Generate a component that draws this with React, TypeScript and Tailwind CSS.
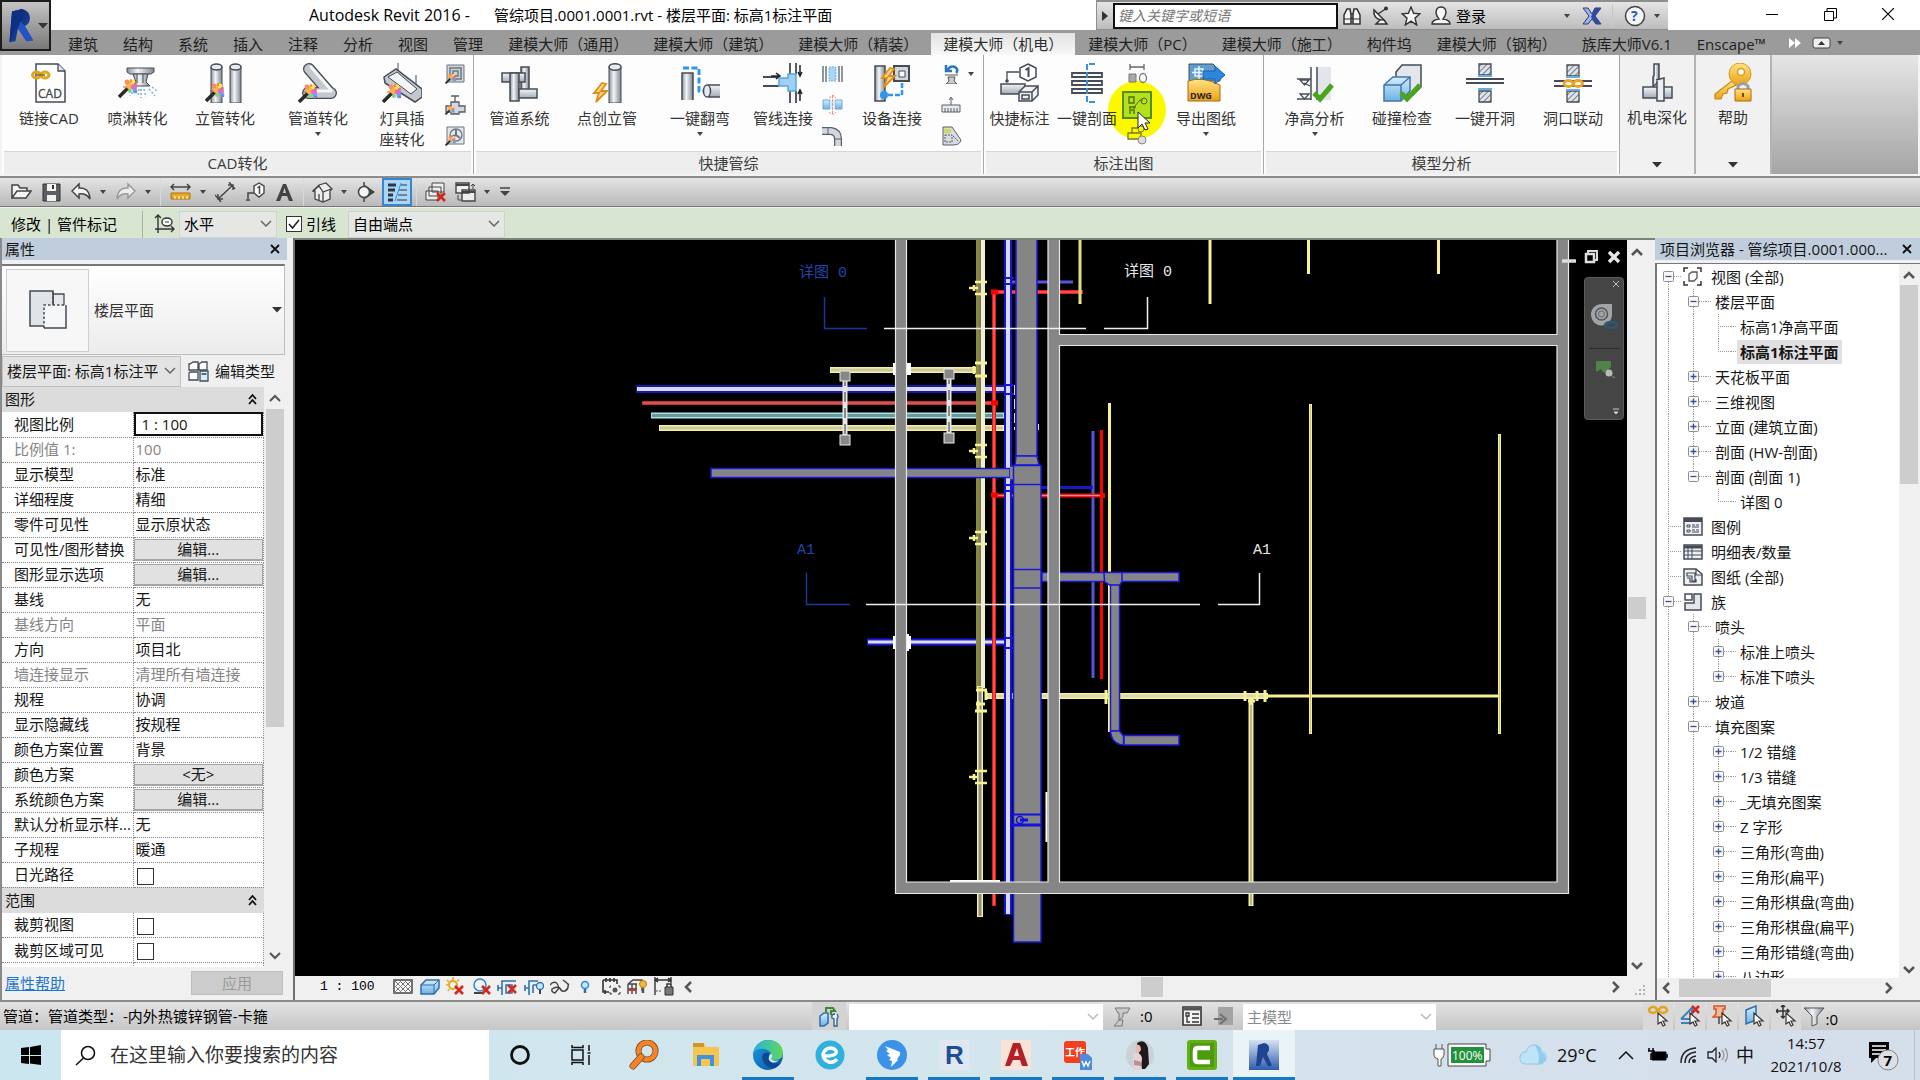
import React from "react";

type Kids = { children?: React.ReactNode };

function Ico({ w = 40, h = 40, vb, children, label }: Kids & { w?: number; h?: number; vb?: string; label?: string }) {
  return (
    <svg width={w} height={h} viewBox={vb ?? `0 0 ${w} ${h}`} fill="none" className="shrink-0" aria-hidden={label ? undefined : true} aria-label={label}>
      {children}
    </svg>
  );
}

function SharedDefs() {
  return (
    <svg width="0" height="0" className="absolute" aria-hidden="true">
      <defs>
        <linearGradient id="mv" x1="0" x2="1" y1="0" y2="0">
          <stop offset="0" stopColor="#8b929c" />
          <stop offset="0.4" stopColor="#f4f6f8" />
          <stop offset="1" stopColor="#7d858f" />
        </linearGradient>
        <linearGradient id="mh" x1="0" x2="0" y1="0" y2="1">
          <stop offset="0" stopColor="#f4f6f8" />
          <stop offset="1" stopColor="#a3abb6" />
        </linearGradient>
        <linearGradient id="bl" x1="0" x2="0" y1="0" y2="1">
          <stop offset="0" stopColor="#d8edfb" />
          <stop offset="1" stopColor="#6cb1e6" />
        </linearGradient>
        <linearGradient id="gold" x1="0" x2="0" y1="0" y2="1">
          <stop offset="0" stopColor="#ffe28a" />
          <stop offset="1" stopColor="#eda211" />
        </linearGradient>
        <linearGradient id="navy" x1="0" x2="1" y1="0" y2="1">
          <stop offset="0" stopColor="#0b2159" />
          <stop offset="1" stopColor="#1f4fc0" />
        </linearGradient>
        <linearGradient id="tile" x1="0" x2="0" y1="0" y2="1">
          <stop offset="0" stopColor="#d6e2f1" />
          <stop offset="1" stopColor="#2f5cb0" />
        </linearGradient>
        <linearGradient id="edge1" x1="0" x2="1" y1="0" y2="1">
          <stop offset="0" stopColor="#1a9ee0" />
          <stop offset="1" stopColor="#0c4f9e" />
        </linearGradient>
        <linearGradient id="edge2" x1="0" x2="1" y1="0" y2="0">
          <stop offset="0" stopColor="#27b5dd" />
          <stop offset="1" stopColor="#62d65a" />
        </linearGradient>
        <pattern id="hatch" width="4" height="4" patternUnits="userSpaceOnUse" patternTransform="rotate(45)">
          <rect width="4" height="4" fill="#dfe2e6" />
          <path d="M0 0V4" stroke="#77808c" strokeWidth="2" />
        </pattern>
      </defs>
    </svg>
  );
}

/* ---------- ribbon icons ---------- */

function Wand({ x = 0, y = 0, s = 1 }: { x?: number; y?: number; s?: number }) {
  return (
    <g transform={`translate(${x} ${y}) scale(${s})`}>
      <path d="M1 19L12 8" stroke="#2a2a2a" strokeWidth="3.4" />
      <circle cx="12" cy="7" r="4.4" fill="#f6b84a" />
      <circle cx="16" cy="9" r="3" fill="#e06ad0" />
      <circle cx="9" cy="4" r="2.4" fill="#ff8a5c" />
      <circle cx="15" cy="4" r="2.4" fill="#ffe14a" />
      <circle cx="17" cy="13" r="2.4" fill="#5aa8f5" />
      <circle cx="12" cy="13" r="2" fill="#7ed96a" />
      <path d="M13 1v3M19 6h-3M8 9H5M19 15l-2-2" stroke="#e8453c" strokeWidth="1" />
    </g>
  );
}
function Bolt({ x = 0, y = 0 }: { x?: number; y?: number }) {
  return <path transform={`translate(${x} ${y})`} d="M9 0L1 10h5L3 19 14 8H8l5-7z" fill="#ffd98a" stroke="#e58a12" strokeWidth="1.8" />;
}
const S = "#454c57";

const ribbonArt: Record<string, React.ReactNode> = {
  cad: (
    <>
      <path d="M7 1h22l7 7v31H7z" fill="#fdfdfd" stroke={S} strokeWidth="1.5" />
      <path d="M29 1v7h7" fill="#e3e6ea" stroke={S} strokeWidth="1.3" />
      <text x="9" y="35" fontSize="12" fontFamily="Open Sans" fill="#444" stroke="#444" strokeWidth="0.3">CAD</text>
      <ellipse cx="7.500" cy="12" rx="4" ry="3" stroke="#e0a420" strokeWidth="3" />
      <ellipse cx="16" cy="12" rx="4" ry="3" stroke="#e0a420" strokeWidth="3" />
      <path d="M8 12h8" stroke="#8a5f0a" strokeWidth="1.500" />
    </>
  ),
  sprinkler: (
    <>
      <path d="M9 5h27v4l-3 2H12l-3-2z" fill="url(#mv)" stroke={S} />
      <path d="M15 11h15l-2 8 4 4H14l4-4z" fill="url(#mv)" stroke={S} />
      <path d="M19 11v9M25 11v9" stroke={S} />
      <path d="M17 26l-5 7M21 26l-1 8M26 26l2 8M31 26l6 7M23 26v9M34 24l5 4" stroke="#74b3e6" strokeWidth="1.500" strokeDasharray="2 2" />
      <Wand y={15} />
    </>
  ),
  riser: (
    <>
      <path d="M6 4v36h11V4" fill="url(#mv)" stroke={S} />
      <ellipse cx="11.500" cy="4" rx="5.500" ry="3" fill="#e7eaee" stroke={S} strokeWidth="1.500" />
      <path d="M25 4v36h11V4" fill="url(#mv)" stroke={S} />
      <ellipse cx="30.500" cy="4" rx="5.500" ry="3" fill="#e7eaee" stroke={S} strokeWidth="1.500" />
      <Wand y={19} />
    </>
  ),
  pipe: (
    <>
      <path d="M11 6L31 29M33 30H10" stroke={S} strokeWidth="12" strokeLinecap="round" />
      <path d="M11 6L31 29M33 30H10" stroke="#c3c8cf" strokeWidth="9.500" strokeLinecap="round" />
      <path d="M13 4L33 27M33 28H10" stroke="#f2f4f6" strokeWidth="3" strokeLinecap="round" />
      <Wand y={20} />
    </>
  ),
  lamp: (
    <>
      <path d="M16 0v8M34 12v10" stroke={S} />
      <path d="M2 14L14 6l26 20v8l-7 5L3 20z" fill="#c3c8cf" stroke={S} strokeWidth="1.500" />
      <path d="M6 14l9-5 20 17-6 5z" fill="#f4f5f7" stroke={S} />
      <Wand y={20} />
    </>
  ),
  system: (
    <>
      <path d="M21 4h8v24h-8z" fill="url(#mv)" stroke={S} strokeWidth="1.500" />
      <path d="M2 10h23v9H2z" fill="url(#mh)" stroke={S} strokeWidth="1.500" />
      <path d="M10 10h9v28h-9z" fill="url(#mv)" stroke={S} strokeWidth="1.500" />
      <path d="M19 26h18v9H19z" fill="url(#mh)" stroke={S} strokeWidth="1.500" />
    </>
  ),
  point: (
    <>
      <path d="M22 4v36h12V4" fill="url(#mv)" stroke={S} />
      <ellipse cx="28" cy="4" rx="6" ry="3.200" fill="#e7eaee" stroke={S} strokeWidth="1.500" />
      <Bolt x={6} y={20} />
    </>
  ),
  flip: (
    <>
      <path d="M2 37V10h11v27" fill="url(#mv)" stroke={S} strokeWidth="1.500" />
      <path d="M3 5h16v23h6" stroke="#2f96f0" strokeWidth="3" strokeDasharray="6 2.500" />
      <path d="M28 22h13v12H28z" fill="url(#mh)" />
      <path d="M28 22h13M28 34h13" stroke={S} strokeWidth="1.500" />
      <ellipse cx="27" cy="28" rx="3.500" ry="6" fill="#e7eaee" stroke={S} strokeWidth="1.500" />
    </>
  ),
  connect: (
    <>
      <path d="M0 14h16M0 23h16M27 0v11M33 0v11M27 28v12M33 28v12" stroke={S} strokeWidth="1.800" />
      <path d="M8 13l8 0M13 10l4 3-4 3M37 2v10M35 9l2 4 2-4M37 38V27M35 31l2-4 2 4" stroke="#222" strokeWidth="1.500" />
      <path d="M16 15h9V11h8v17h-8v-5h-9z" fill="#9fd0f4" stroke="#57a7e2" strokeWidth="1.500" />
    </>
  ),
  equip: (
    <>
      <path d="M3 3v35h10V3z" fill="url(#mv)" stroke={S} strokeWidth="1.500" />
      <path d="M22 3h15v15H22z" fill="#d3d7dc" stroke={S} strokeWidth="2" />
      <path d="M27 8h6v6h-6z" fill="#fff" stroke={S} />
      <path d="M30 20v12H14" stroke="#2f96f0" strokeWidth="2.500" strokeDasharray="5 2" />
      <circle cx="12" cy="32" r="4" fill="#2f96f0" />
      <Bolt x={9} y={5} />
    </>
  ),
  tag: (
    <>
      <path d="M7 18V9h12" stroke={S} strokeWidth="1.300" />
      <circle cx="7" cy="18" r="1.800" fill={S} />
      <path d="M28 1l8 4v9l-8 4-8-4V5z" fill="#fff" stroke={S} strokeWidth="1.500" />
      <path d="M25.500 7l3-2v9" stroke={S} strokeWidth="2" />
      <path d="M1 21h24v10H1z" fill="url(#mh)" stroke={S} strokeWidth="1.500" />
      <path d="M19 29l6-6h13v9l-6 6H19zM19 29h13v9M32 29l6-6M22 32h7v4h-7z" fill="#eef0f3" stroke={S} strokeWidth="1.500" />
    </>
  ),
  section: (
    <>
      {[10, 18, 26].map((y) => (
        <path key={y} d={`M5 ${y}h30v4H5z`} fill="#fff" stroke={S} strokeWidth="1.800" />
      ))}
      <path d="M28 1h-8v38h8" stroke="#3d8fd8" strokeWidth="2" strokeDasharray="6 2" />
    </>
  ),
  dwg: (
    <>
      <path d="M3 1h24l7 7v10H3z" fill="#5f9fd0" stroke={S} />
      <path d="M9 6h8v7H9zM13 3v13M6 9.500h14" stroke="#eaf5ff" strokeWidth="1.500" />
      <path d="M2 18q14-5 32 4v16H2z" fill="url(#gold)" stroke="#9c7108" />
      <path d="M17 8h12V3l10 9-10 9v-5H17z" fill="#2f86dd" stroke="#1c5fa8" />
      <text x="4" y="36" fontSize="9" fontWeight="700" fontFamily="Open Sans" fill="#222">DWG</text>
    </>
  ),
  height: (
    <>
      <path d="M22 4h14v33H22z" fill="#e2e5e9" />
      <path d="M16 4v33M22 4v33M2 16h14M2 36h14" stroke={S} strokeWidth="1.500" />
      <path d="M5 17h9l-4.500 5zM5 31h9l-4.500 5zM9 20l6 3" stroke={S} strokeWidth="1.300" />
      <path d="M19 30l6 6L37 22" stroke="#4aa51d" strokeWidth="5" />
    </>
  ),
  clash: (
    <>
      <path d="M14 9l6-7h19v22l-8 8H14z" fill="#e3e7eb" stroke={S} strokeWidth="1.500" />
      <path d="M2 22l9-8h17v14l-9 10H2z" fill="url(#bl)" stroke="#3f78ab" strokeWidth="1.500" />
      <path d="M2 22h17v16M19 22l9-8" stroke="#3f78ab" strokeWidth="1.500" />
      <path d="M19 30l6 6L38 22" stroke="#4aa51d" strokeWidth="5" />
    </>
  ),
  hole: (
    <>
      <path d="M14 1h12v11H14zM14 28h12v11H14z" fill="url(#hatch)" stroke={S} strokeWidth="1.300" />
      <path d="M1 16h38M1 20h38" stroke={S} strokeWidth="2" />
      <path d="M13 13h14M13 26h14" stroke="#64aee8" strokeWidth="2" />
    </>
  ),
  link: (
    <>
      <path d="M14 2h12v11H14zM14 28h12v11H14z" fill="url(#hatch)" stroke={S} strokeWidth="1.300" />
      <path d="M1 18h38M1 23h38" stroke={S} strokeWidth="1.800" />
      <path d="M13 14h14M13 27h14" stroke="#64aee8" strokeWidth="2" />
      <ellipse cx="15.500" cy="20.500" rx="4.500" ry="3" stroke="#e9a31c" strokeWidth="2.800" />
      <ellipse cx="25" cy="20.500" rx="4.500" ry="3" stroke="#e9a31c" strokeWidth="2.800" />
    </>
  ),
  mep: (
    <>
      <path d="M17 1h5v17l-6 6v-10l1-2z" fill="url(#mv)" stroke={S} strokeWidth="1.500" />
      <path d="M6 24h29v11H6z" fill="url(#mh)" stroke={S} strokeWidth="1.500" />
      <path d="M19 17l8-2v23h-7V18" fill="#eceef1" stroke={S} strokeWidth="1.500" />
    </>
  ),
  key: (
    <>
      <path d="M19 18L2 31v5h6l2-5 4-1 1-4 8-4z" fill="url(#gold)" stroke="#c98a16" strokeWidth="1.200" />
      <circle cx="27" cy="11" r="11" fill="url(#gold)" stroke="#d99a20" />
      <circle cx="28" cy="9" r="3.500" fill="#fff" stroke="#d99a20" strokeWidth="1.500" />
      <path d="M25 27v-4q5-5 10 0v4" stroke="#9aa0a8" strokeWidth="3" />
      <path d="M22 26h16v12H22z" fill="url(#gold)" stroke="#b06a08" />
      <path d="M30 30v4" stroke="#7a4a04" strokeWidth="2" />
    </>
  ),
};

const smallArt: Record<string, React.ReactNode> = {
  vent: (
    <>
      <path d="M2 1h17v17H2z" fill="#cfd4da" stroke="#6d7580" />
      <path d="M5 4h11v11H5zM8 7h5v5H8z" stroke="#6d7580" strokeWidth="1.500" />
      <Wand y={9} s={0.55} />
    </>
  ),
  valve: (
    <>
      <path d="M6 1h8M10 1v6M6 7h8v4h6v6h-6v2H6v-2H1v-6h5z" fill="#d5d9de" stroke="#555d68" strokeWidth="1.300" />
      <Wand y={10} s={0.5} />
    </>
  ),
  fan: (
    <>
      <path d="M2 1h17v17H2z" fill="#e5e8eb" stroke="#6d7580" />
      <circle cx="11" cy="9" r="6" stroke="#6d7580" strokeWidth="1.300" />
      <path d="M11 9V4M11 9l4 3M11 9l-5 2" stroke="#6d7580" strokeWidth="2" />
      <Wand y={9} s={0.55} />
    </>
  ),
  split: (
    <>
      <path d="M1 2v16M4 2v16M17 2v16M20 2v16" stroke="#6d7580" strokeWidth="1.500" />
      <path d="M7 3h7v14H7z" fill="#a9d6f5" stroke="#74b3e6" strokeDasharray="2 1" />
    </>
  ),
  cut: (
    <>
      <path d="M1 5h7v9H1zM13 5h7v9h-7z" fill="url(#bl)" stroke="#6ba9dc" />
      <path d="M8 6h5v7H8z" fill="#d4ebfa" />
      <path d="M10.500 0v20M7 3l3.500-3L14 3M7 17l3.500 3 3.500-3" stroke="#ee8d80" strokeDasharray="3 1" />
    </>
  ),
  elbow: (
    <>
      <path d="M0 5h9q7 1 7 8v7" stroke="#59616c" strokeWidth="8" />
      <path d="M0 5h9q7 1 7 8v7" stroke="#d4d8dd" strokeWidth="5.500" />
      <path d="M6 1v8M12 13h8" stroke="#59616c" />
    </>
  ),
  undoSp: (
    <>
      <path d="M5 1v6h6M6 7q3-6 8-4 4 3 1 6" stroke="#2777c4" strokeWidth="2.500" />
      <path d="M4 11h13M7 13h7l-1 4 3 3H5l3-3z" fill="#c8cdd3" stroke="#555" />
    </>
  ),
  ruler: (
    <>
      <path d="M1 10h18v7H1z" fill="#e9ebee" stroke="#59616c" />
      <path d="M4 13v4M7 13v4M10 13v4M13 13v4M16 13v4M10 10V3M8 5l2-3 2 3" stroke="#59616c" />
    </>
  ),
  calc: (
    <>
      <path d="M2 1h9l9 13q-1 5-8 5H2z" fill="#d8dce1" stroke="#59616c" />
      <path d="M3 3h7v4H3z" fill="#c9dd5a" />
      <path d="M4 9h7v7H4zM12 10l5 5" stroke="#59616c" strokeDasharray="2 1" />
    </>
  ),
  dims: (
    <>
      <path d="M3 3h14M3 0v6M17 0v6" stroke="#666" strokeWidth="1.300" />
      <path d="M2 10h7v8H2z" fill="#aaa" stroke="#777" />
      <ellipse cx="16" cy="14" rx="3.500" ry="4.500" stroke="#777" strokeWidth="1.300" />
    </>
  ),
  tagSet: (
    <>
      <path d="M5 8V3h6M1 8h13v6H1z" stroke="#77771a" strokeWidth="1.300" />
      <circle cx="14" cy="4" r="3" stroke="#77771a" />
      <circle cx="15" cy="15" r="4" fill="#ddd" stroke="#888" />
    </>
  ),
  tags: (
    <>
      <path d="M2 2h5v6H2zM2 12h7M3 12v7M7 12v7M4 15h2" stroke="#4d6b10" strokeWidth="1.300" />
      <path d="M8 11l5-6h3" stroke="#4d6b10" />
      <circle cx="17" cy="6" r="3" stroke="#4d6b10" />
    </>
  ),
};

function Caret({ big = false }: { big?: boolean }) {
  return big ? (
    <Ico w={10} h={6}><path d="M0 0h10L5 5.500z" fill="#333" /></Ico>
  ) : (
    <Ico w={6} h={4}><path d="M0 0h6L3 4z" fill="#444" /></Ico>
  );
}

function BigBtn({ art, label, width, arrow = false }: { art: string; label: React.ReactNode; width: string; arrow?: boolean }) {
  return (
    <button className={`flex flex-col items-center pt-[8px] ${width}`}>
      <Ico w={40} h={40}>{ribbonArt[art]}</Ico>
      <span className="z-10 mt-[5px] text-[15px] leading-[21px] text-[#333] whitespace-nowrap">{label}</span>
      {arrow && <span className="mt-[3px]"><Caret /></span>}
    </button>
  );
}

function SmallCol({ items, width, carets = false }: { items: string[]; width: string; carets?: boolean }) {
  return (
    <div className={`relative flex flex-col items-center gap-[11px] pt-[9px] ${width}`}>
      {items.map((k, i) => (
        <button key={k} aria-label={k} className="relative flex h-[20px] items-center">
          <Ico w={21} h={20}>{smallArt[k]}</Ico>
          {carets && i === 0 && <span className="absolute left-[27px]"><Caret /></span>}
        </button>
      ))}
    </div>
  );
}

function Panel({ title, width, children }: Kids & { title: string; width: string }) {
  return (
    <section className={`flex flex-col border-r border-[#a8a8a8] bg-[#fdfdfd] ${width}`}>
      <div className="flex h-[98px] items-start">{children}</div>
      <div className="mx-[2px] flex-1 border-t border-[#d6d6d6] bg-[#eeeeee] text-center text-[15px] leading-[22px] text-[#3c3c3c]">{title}</div>
    </section>
  );
}

function CollapsedPanel({ art, label }: { art: string; label: string }) {
  return (
    <section className="flex w-[76px] flex-col items-center border-r-2 border-[#b4b4b4] bg-[#f1f1f2]">
      <button className="flex h-full flex-col items-center pt-[8px]">
        <Ico w={40} h={40}>{ribbonArt[art]}</Ico>
        <span className="mt-[4px] text-[15px] leading-[21px] text-[#333]">{label}</span>
        <span className="mt-auto mb-[6px]"><Caret big /></span>
      </button>
    </section>
  );
}

/* ---------- header ---------- */

const tabs = ["建筑", "结构", "系统", "插入", "注释", "分析", "视图", "管理", "建模大师（通用）", "建模大师（建筑）", "建模大师（精装）", "建模大师（机电）", "建模大师（PC）", "建模大师（施工）", "构件坞", "建模大师（钢构）", "族库大师V6.1", "Enscape™"];

function RevitR({ w, h }: { w: number; h: number }) {
  return (
    <Ico w={w} h={h} vb="0 0 30 40">
      <path d="M5 3L17 0q10 3 9 12-1 6-6 8l10 17-8 1-10-15-3 15-7 1z" fill="url(#navy)" />
      <path d="M5 3l12-3q4 8-2 15L9 21 2 39z" fill="#0f2f86" />
      <path d="M15 15l5 5 10 17-8 1-10-15z" fill="#2453c4" />
    </Ico>
  );
}

function Header() {
  return (
    <header className="flex shrink-0 bg-[#9b9b9b]">
      <button aria-label="应用程序菜单" className="flex h-[51px] w-[51px] shrink-0 items-center gap-[4px] border-2 border-[#1c1c1c] bg-gradient-to-b from-[#c4c4c4] to-[#7a7a7a] pl-[5px]">
        <RevitR w={27} h={34} />
        <Caret big />
      </button>
      <div className="min-w-0 flex-1">
        <div className="flex h-[30px] bg-white">
          <div className="flex flex-1 items-center gap-[24px] pl-[258px] leading-[28px] whitespace-nowrap text-black">
            <span className="text-[16px]">Autodesk Revit 2016 -</span>
            <span className="text-[15px]">管综项目.0001.0001.rvt - 楼层平面: 标高1标注平面</span>
          </div>
          <div className="flex h-[30px] w-[572px] items-center border-t-2 border-b border-[#8d8d8d] bg-gradient-to-b from-[#e4e4e4] to-[#bdbdbd]">
            <button aria-label="展开" className="flex h-full w-[17px] items-center justify-center border-l border-[#8d8d8d]">
              <Ico w={6} h={10}><path d="M0 0l6 5-6 5z" fill="#333" /></Ico>
            </button>
            <input aria-label="搜索" placeholder="键入关键字或短语" className="h-[26px] w-[225px] border-2 border-[#111] bg-white px-[3px] text-[14px] italic placeholder:text-[#777] placeholder:italic" />
            <div className="flex flex-1 items-center pl-[4px]">
              <button aria-label="查找" className="w-[30px]">
                <Ico w={20} h={20}><path d="M2 18V9l3-6h3l1 6v9zM18 18V9l-3-6h-3l-1 6v9zM9 8h2M9 12h2" fill="#f4f4f4" stroke="#333" strokeWidth="1.500" /><path d="M2 13h7M11 13h7" stroke="#333" /></Ico>
              </button>
              <button aria-label="通讯中心" className="w-[29px]">
                <Ico w={18} h={20}><path d="M2 4q-1 10 10 10L2 4zM6 8l9-6M8 14l-4 4h11l-3-4" fill="#f4f4f4" stroke="#333" strokeWidth="1.500" /><circle cx="14" cy="2.500" r="2" fill="#333" /></Ico>
              </button>
              <button aria-label="收藏夹" className="w-[30px]">
                <Ico w={20} h={20}><path d="M10 1l2.600 6.300 6.400.500-5 4.300 1.700 6.900L10 15.200 4.300 19 6 12.100 1 7.800l6.400-.500z" fill="#f7f7f7" stroke="#333" strokeWidth="1.400" /></Ico>
              </button>
              <button className="flex items-center gap-[5px] text-[15px] leading-[24px] text-black">
                <Ico w={20} h={20}><path d="M10 1q5 0 5 6-1 4-3 6 7 1 7 5H1q0-4 7-5-2-2-3-6 0-6 5-6z" fill="#f7f7f7" stroke="#333" strokeWidth="1.400" /></Ico>
                登录
              </button>
              <span className="ml-auto"><Caret /></span>
              <button aria-label="交换" className="ml-[12px] w-[30px]">
                <Ico w={20} h={18}><path d="M1 1h5l4 6 3-6h6l-6 8 6 8h-5l-4-5-4 5H1l6-8z" fill="#9fb1e6" stroke="#2a3a7a" /><path d="M13 1h6l-6 8 6 8h-5l-5-7z" fill="#31489f" /></Ico>
              </button>
              <span className="h-[24px] w-px bg-[#c9c9c9]" />
              <button aria-label="帮助" className="ml-[11px]">
                <Ico w={22} h={22}><circle cx="11" cy="11" r="9.500" fill="#f2f5fa" stroke="#444" strokeWidth="1.500" /><text x="7" y="16" fontSize="14" fontWeight="700" fontFamily="Open Sans" fill="#2b55b5">?</text></Ico>
              </button>
              <span className="mx-[8px]"><Caret /></span>
            </div>
          </div>
          <div className="flex w-[252px] items-center justify-end gap-[34px] pr-[20px] pb-[2px] text-black">
            <button aria-label="最小化" className="flex w-[24px] justify-center"><Ico w={12} h={12}><path d="M0 6.500h12" stroke="#000" /></Ico></button>
            <button aria-label="还原" className="flex w-[24px] justify-center"><Ico w={13} h={13}><path d="M.5 3.500h9v9h-9zM3 3V.5h9.500V10H10" stroke="#000" /></Ico></button>
            <button aria-label="关闭" className="flex w-[24px] justify-center"><Ico w={12} h={12}><path d="M0 0l12 12M12 0L0 12" stroke="#000" strokeWidth="1.200" /></Ico></button>
          </div>
        </div>
        <nav className="flex h-[25px] items-end gap-px pl-[5px]">
          {tabs.map((t, i) => (
            <button key={t} className={i === 11 ? "h-[22px] bg-gradient-to-b from-[#e2e2e2] to-[#f8f8f8] px-[12px] text-[15px] leading-[20px] whitespace-nowrap text-[#2d2d2d]" : "h-[22px] px-[12px] text-[15px] leading-[20px] whitespace-nowrap text-[#1f1f1f]"}>
              {t}
            </button>
          ))}
          <button aria-label="更多" className="flex h-[24px] w-[32px] items-center justify-center"><Ico w={12} h={10}><path d="M0 0l6 5-6 5zM6 0l6 5-6 5z" fill="#fff" /></Ico></button>
          <button aria-label="最小化功能区" className="flex h-[24px] items-center gap-[6px]"><Ico w={19} h={12}><rect x="1" y="1" width="17" height="10" rx="2" fill="#eee" stroke="#444" /><path d="M6 8l3.500-4L13 8z" fill="#333" /></Ico><Caret /></button>
        </nav>
      </div>
    </header>
  );
}

function Ribbon() {
  return (
    <div className="flex h-[123px] shrink-0 border-b-2 border-[#8c8c8c] bg-[#f4f4f4] pr-[2px] pb-[2px] pl-[2px]">
      <div className="flex h-full flex-1 bg-gradient-to-b from-[#e6e6e6] to-[#a5a5a5]">
        <Panel title="CAD转化" width="w-[472px]">
          <BigBtn art="cad" label="链接CAD" width="w-[94px]" />
          <BigBtn art="sprinkler" label="喷淋转化" width="w-[83px]" />
          <BigBtn art="riser" label="立管转化" width="w-[92px]" />
          <BigBtn art="pipe" label="管道转化" width="w-[94px]" arrow />
          <BigBtn art="lamp" label={<>灯具插<br />座转化</>} width="w-[74px]" />
          <SmallCol items={["vent", "valve", "fan"]} width="w-[32px]" />
        </Panel>
        <Panel title="快捷管综" width="w-[510px]">
          <BigBtn art="system" label="管道系统" width="w-[91px]" />
          <BigBtn art="point" label="点创立管" width="w-[84px]" />
          <BigBtn art="flip" label="一键翻弯" width="w-[102px]" arrow />
          <BigBtn art="connect" label="管线连接" width="w-[64px]" />
          <SmallCol items={["split", "cut", "elbow"]} width="w-[35px]" />
          <BigBtn art="equip" label="设备连接" width="w-[84px]" />
          <SmallCol items={["undoSp", "ruler", "calc"]} width="w-[35px]" carets />
        </Panel>
        <Panel title="标注出图" width="w-[280px]">
          <BigBtn art="tag" label="快捷标注" width="w-[71px]" />
          <BigBtn art="section" label="一键剖面" width="w-[64px]" />
          <div className="relative w-[36px]">
            <div className="absolute top-[26px] left-[-11px] h-[58px] w-[58px] rounded-full bg-[#fcf800]" />
            <SmallCol items={["dims"]} width="w-[36px]" />
            <button aria-label="标注设置" className="absolute top-[36px] left-[3px] flex h-[28px] w-[30px] items-center justify-center border-2 border-[#4f8f1c] bg-[#b4e01c]">
              <Ico w={21} h={21}>{smallArt.tags}</Ico>
            </button>
            <button aria-label="标注样式" className="absolute top-[70px] left-[8px]"><Ico w={21} h={20}>{smallArt.tagSet}</Ico></button>
            <div className="absolute top-[56px] left-[18px]">
              <Ico w={14} h={20}><path d="M1 1v16l4-4 3 6 3-1-3-6h5z" fill="#fff" stroke="#222" /></Ico>
            </div>
          </div>
          <BigBtn art="dwg" label="导出图纸" width="w-[102px]" arrow />
        </Panel>
        <Panel title="模型分析" width="w-[356px]">
          <BigBtn art="height" label="净高分析" width="w-[101px]" arrow />
          <BigBtn art="clash" label="碰撞检查" width="w-[74px]" />
          <BigBtn art="hole" label="一键开洞" width="w-[92px]" />
          <BigBtn art="link" label="洞口联动" width="w-[84px]" />
        </Panel>
        <CollapsedPanel art="mep" label="机电深化" />
        <CollapsedPanel art="key" label="帮助" />
      </div>
    </div>
  );
}

/* ---------- quick access + options ---------- */

const D = "#444";
const qat: { w: string; n: string; art: React.ReactNode; on?: boolean }[] = [
  { w: "w-[30px]", n: "打开", art: <path d="M1 16V3h6l2 3h7v3M1 16l5-7h14l-5 7z" fill="#f4f4f4" stroke={D} strokeWidth="1.500" /> },
  { w: "w-[30px]", n: "保存", art: <><path d="M2 2h17v17H2z" fill="#5a5f66" stroke="#333" /><path d="M6 2h9v7H6zM6 13h9v6H6z" fill="#f2f2f2" /><path d="M12 3v4" stroke="#333" strokeWidth="2" /></> },
  { w: "w-[30px]", n: "放弃", art: <path d="M1 9l7-7v4q10-1 11 11-4-6-11-5v4z" fill="#f4f4f4" stroke={D} strokeWidth="1.500" /> },
  { w: "w-[14px]", n: "放弃列表", art: null },
  { w: "w-[30px]", n: "重做", art: <path d="M20 9l-7-7v4Q3 5 2 17q4-6 11-5v4z" fill="#eee" stroke="#999" strokeWidth="1.500" /> },
  { w: "w-[15px]", n: "重做列表", art: null },
  { w: "w-[10px]", n: "|", art: null },
  { w: "w-[30px]", n: "测量", art: <><path d="M1 5h19M4 2L1 5l3 3M17 2l3 3-3 3" stroke={D} strokeWidth="1.500" /><path d="M1 11h19v6H1z" fill="#eba922" stroke="#a87408" /><path d="M5 14v3M9 14v3M13 14v3M17 14v3" stroke="#fff" /></> },
  { w: "w-[15px]", n: "测量列表", art: null },
  { w: "w-[30px]", n: "对齐尺寸标注", art: <path d="M3 17L18 3M0 13l6 7M14 0l6 7M3 12v5h5M13 3h5v5" stroke={D} strokeWidth="1.400" /> },
  { w: "w-[30px]", n: "按类别标记", art: <><path d="M3 17v-6h7M1 18h4" stroke={D} strokeWidth="1.500" /><path d="M14 1l5 3v7l-5 4-5-4V4z" fill="#fff" stroke={D} strokeWidth="1.400" /><path d="M12.500 6l2-1.500V12" stroke={D} strokeWidth="1.500" /></> },
  { w: "w-[28px]", n: "文字", art: <path d="M2 19L9 2h3l7 17h-4l-2-5H8l-2 5zM9 11h3l-1.500-5z" fill="#444" fillRule="evenodd" /> },
  { w: "w-[10px]", n: "|", art: null },
  { w: "w-[28px]", n: "默认三维视图", art: <><path d="M1 9l6-6 7-2 6 6-2 2v8l-7 3-8-3V9z" fill="#eee" stroke={D} strokeWidth="1.300" /><path d="M11 10v10M1 9l6-5 4 6 8-3M7 12v6" stroke={D} strokeWidth="1.300" /></> },
  { w: "w-[15px]", n: "三维视图列表", art: null },
  { w: "w-[31px]", n: "剖面", art: <><path d="M9 3l10 7-10 7z" fill={D} /><circle cx="8" cy="10" r="5.500" fill="#f4f4f4" stroke={D} strokeWidth="1.500" /><path d="M8 0v4M8 16v4" stroke={D} strokeWidth="1.500" /></> },
  { w: "w-[30px]", n: "细线", on: true, art: <><path d="M1 3h8M1 8h7M1 13h5M1 18h5" stroke="#2b3745" strokeWidth="3" /><path d="M14 3h6M12 8h8M11 13h9M10 18h10" stroke="#2b3745" /><path d="M14 1L8 19" stroke="#3d8fd8" /></> },
  { w: "w-[8px]", n: "|", art: null },
  { w: "w-[30px]", n: "关闭隐藏窗口", art: <><path d="M7 1h12v9H7zM4 5h12v9H4zM1 9h12v9H1z" fill="#eee" stroke={D} /><path d="M12 11l8 8M20 11l-8 8" stroke="#d3261f" strokeWidth="2.500" /></> },
  { w: "w-[30px]", n: "切换窗口", art: <><path d="M1 1h13v10H1zM7 8h13v11H7z" fill="#eee" stroke={D} strokeWidth="1.400" /><path d="M1 3h13M7 10h13" stroke={D} strokeWidth="2" /><path d="M18 7V2l-2 2M18 2l2 2M3 13v5h3" stroke={D} /></> },
  { w: "w-[14px]", n: "窗口列表", art: null },
];

function QuickAccess() {
  return (
    <div className="flex h-[29px] shrink-0 items-center border-b border-[#777] bg-gradient-to-b from-[#e4e4e4] to-[#b9b9b9] pl-[6px]">
      {qat.map((q, i) =>
        q.n === "|" ? (
          <span key={i} className={`flex h-full justify-center ${q.w}`}><i className="w-px bg-[#d8d8d8]" /></span>
        ) : (
          <button key={i} aria-label={q.n} className={`flex h-[28px] items-center justify-center ${q.w} ${q.on ? "border-2 border-[#3785cf] bg-[#a9d6f7]" : ""}`}>
            {q.art ? <Ico w={21} h={21}>{q.art}</Ico> : <Caret />}
          </button>
        ),
      )}
      <button aria-label="自定义快速访问工具栏" className="ml-[6px]">
        <Ico w={10} h={10}><path d="M0 1h10" stroke="#444" strokeWidth="1.500" /><path d="M0 4h10L5 9z" fill="#444" /></Ico>
      </button>
    </div>
  );
}

function Chevron({ dir = "down", color = "#555", thick = 2 }: { dir?: "down" | "up" | "left" | "right"; color?: string; thick?: number }) {
  const d = { down: "M1 3l5 5 5-5", up: "M1 9l5-5 5 5", left: "M8 1L3 6l5 5", right: "M4 1l5 5-5 5" }[dir];
  return <Ico w={12} h={12}><path d={d} stroke={color} strokeWidth={thick} /></Ico>;
}

function Picker({ label, value, className, chevron = "#666" }: { label: string; value: string; className: string; chevron?: string }) {
  return (
    <div className={`relative ${className}`}>
      <select aria-label={label} className="h-full w-full appearance-none overflow-hidden bg-transparent pr-[22px] pl-[4px] text-[15px] text-clip outline-none">
        <option>{value}</option>
      </select>
      <span className="pointer-events-none absolute inset-y-0 right-[4px] flex items-center"><Chevron color={chevron} thick={1.500} /></span>
    </div>
  );
}

function OptionsBar() {
  return (
    <div className="flex h-[31px] shrink-0 items-center border-t border-[#eef3ea] bg-[#d8e5d0] pt-[2px] text-[15px] text-black">
      <span className="w-[143px] border-r border-[#a9b3a3] pl-[11px] leading-[27px]">修改 | 管件标记</span>
      <span className="ml-[11px] w-[25px]">
        <Ico w={22} h={20}><path d="M4 1v18M1 15h19M1 4l3-3 3 3M17 12l3 3-3 3" stroke="#333" strokeWidth="1.400" /><ellipse cx="13" cy="8" rx="5" ry="4" fill="#fff" stroke="#333" strokeWidth="1.400" /><path d="M11 8h4" stroke="#333" /></Ico>
      </span>
      <Picker label="方向" value="水平" className="h-[27px] w-[98px] border border-[#d0d0d0] bg-[#e5e7e4]" />
      <label className="ml-[9px] flex items-center gap-[4px]">
        <span className="relative flex">
          <input type="checkbox" defaultChecked className="h-[16px] w-[16px] appearance-none border border-[#333] bg-white" />
          <span className="pointer-events-none absolute inset-0 flex items-center justify-center"><Ico w={12} h={12}><path d="M1 6l3.500 4L11 2" stroke="#222" strokeWidth="1.600" /></Ico></span>
        </span>
        引线
      </label>
      <Picker label="引线端点" value="自由端点" className="ml-[12px] h-[27px] w-[157px] border border-[#d0d0d0] bg-[#e5e7e4]" />
    </div>
  );
}

/* ---------- properties ---------- */

type Row = { k: string; v?: string; t?: "dim" | "btn" | "chk" | "txt" | "head" };
const props: Row[] = [
  { k: "图形", t: "head" },
  { k: "视图比例", v: "1 : 100", t: "txt" },
  { k: "比例值 1:", v: "100", t: "dim" },
  { k: "显示模型", v: "标准" },
  { k: "详细程度", v: "精细" },
  { k: "零件可见性", v: "显示原状态" },
  { k: "可见性/图形替换", v: "编辑...", t: "btn" },
  { k: "图形显示选项", v: "编辑...", t: "btn" },
  { k: "基线", v: "无" },
  { k: "基线方向", v: "平面", t: "dim" },
  { k: "方向", v: "项目北" },
  { k: "墙连接显示", v: "清理所有墙连接", t: "dim" },
  { k: "规程", v: "协调" },
  { k: "显示隐藏线", v: "按规程" },
  { k: "颜色方案位置", v: "背景" },
  { k: "颜色方案", v: "<无>", t: "btn" },
  { k: "系统颜色方案", v: "编辑...", t: "btn" },
  { k: "默认分析显示样...", v: "无" },
  { k: "子规程", v: "暖通" },
  { k: "日光路径", t: "chk" },
  { k: "范围", t: "head" },
  { k: "裁剪视图", t: "chk" },
  { k: "裁剪区域可见", t: "chk" },
  { k: "注释裁剪", t: "chk" },
];

function CloseX() {
  return <Ico w={10} h={10}><path d="M1 1l8 8M9 1L1 9" stroke="#111" strokeWidth="1.800" /></Ico>;
}

function PropValue({ r }: { r: Row }) {
  if (r.t === "btn") return <button className="block h-[22px] w-full border border-b-2 border-[#a5a5a5] bg-[#e1e1e1] text-[15px] leading-[19px]">{r.v}</button>;
  if (r.t === "chk") return <input type="checkbox" aria-label={r.k} className="mt-[3px] ml-[3px] block h-[17px] w-[17px] appearance-none border border-[#333] bg-white" />;
  if (r.t === "txt") return <input aria-label={r.k} defaultValue={r.v} className="block h-[24px] w-full border-2 border-[#111] bg-white px-[6px] text-[15px]" />;
  return <span className="pl-[2px]">{r.v}</span>;
}

function Properties() {
  return (
    <aside className="flex w-[295px] shrink-0 border-r-2 border-[#6f6f6f] bg-[#f0f0f0] text-[15px] text-[#161616]">
      <div className="flex w-[285px] min-w-0 flex-col border-l-2 border-[#8a8a8a]">
        <div className="-mr-[2px] flex h-[22px] items-center justify-between bg-[#bfcddd] pr-[7px] pl-[3px] leading-[22px]">
          属性
          <button aria-label="关闭属性"><CloseX /></button>
        </div>
        <div className="mt-[4px] flex h-[91px] shrink-0 items-center border-t-2 border-r border-b border-[#bdbdbd] border-t-[#777] bg-gradient-to-b from-white to-[#ececec] pl-[4px]">
          <div className="flex h-[83px] w-[83px] items-center justify-center border border-[#cfcfcf] bg-[#f7f7f7]">
            <Ico w={40} h={40}>
              <path d="M25 4h11v20H25z" fill="#e4e7eb" stroke={S} strokeWidth="1.300" />
              <path d="M2 1h23v35H2z" fill="#e0e4e9" stroke={S} strokeWidth="1.500" />
              <path d="M16 15h22v23H16z" fill="#f5f7f9" />
              <path d="M38 15v23H16" stroke={S} strokeWidth="1.500" />
              <path d="M16 38V15h22M25 2v13" stroke={S} strokeWidth="1.500" strokeDasharray="2.500 2" />
            </Ico>
          </div>
          <span className="ml-[5px] flex-1 text-[#333]">楼层平面</span>
          <span className="mr-[2px]"><Caret big /></span>
        </div>
        <div className="flex h-[32px] shrink-0 items-center">
          <Picker label="视图" value="楼层平面: 标高1标注平面" className="h-[31px] w-[179px] border border-[#c0c0c0] bg-[#e3e3e3]" />
          <button className="ml-[7px] flex items-center gap-[6px] leading-[24px] whitespace-nowrap">
            <Ico w={21} h={21}><path d="M2 3l3-2h5v8H1V3zM11 3l3-2h5v8h-8zM2 11h8v8H1v-7z" fill="#fff" stroke={S} strokeWidth="1.300" /><path d="M12 10h8v10h-8z" fill="#dfe9f2" stroke={S} strokeWidth="1.300" /><path d="M13.500 12h5v2h-5z" fill="#2a7ab8" /></Ico>
            编辑类型
          </button>
        </div>
        <div className="flex min-h-0 flex-1">
          <div className="h-full w-[262px] overflow-hidden bg-white">
            <table className="w-full table-fixed border-collapse">
              <colgroup><col className="w-[131px]" /><col /></colgroup>
              <tbody>
                {props.map((r) =>
                  r.t === "head" ? (
                    <tr key={r.k} className="h-[25px]">
                      <th colSpan={2} className="bg-[#dcdcdc] p-0 font-normal">
                        <div className="flex h-[25px] items-center justify-between pr-[7px] pl-[3px] leading-[25px]">
                          {r.k}
                          <Ico w={9} h={11}><path d="M1 5l3.500-4L8 5M1 10l3.500-4L8 10" stroke="#111" strokeWidth="1.800" /></Ico>
                        </div>
                      </th>
                    </tr>
                  ) : (
                    <tr key={r.k} className={r.t === "dim" ? "h-[25px] text-[#858585]" : "h-[25px]"}>
                      <th className="h-[25px] overflow-hidden border-r border-b border-dotted border-[#888] p-0 pl-[12px] text-left font-normal leading-[23px] whitespace-nowrap">{r.k}</th>
                      <td className="h-[25px] border-r border-b border-dotted border-[#888] p-0 leading-[23px] whitespace-nowrap"><PropValue r={r} /></td>
                    </tr>
                  ),
                )}
              </tbody>
            </table>
          </div>
          <div className="ml-[2px] flex w-[18px] flex-col items-center">
            <span className="flex h-[22px] items-center"><Chevron dir="up" /></span>
            <span className="h-[318px] w-full bg-[#cdcdcd]" />
            <span className="mt-auto flex h-[22px] items-center"><Chevron /></span>
          </div>
        </div>
        <div className="flex h-[33px] shrink-0 items-center justify-between pr-[2px] pb-px pl-[3px]">
          <a href="#help" className="text-[#1a76d2] underline">属性帮助</a>
          <button disabled className="h-[24px] w-[92px] border border-[#bdbdbd] bg-[#cccccc] text-[#9a9a9a] leading-[20px]">应用</button>
        </div>
      </div>
    </aside>
  );
}

/* ---------- drawing ---------- */

const Y = "#f6f293";
const coreWidth = (w: number) => (w >= 7 ? w - 4 : Math.max(1, w - 3));

function PipeV({ x, y1, y2, w, edge, core }: { x: number; y1: number; y2: number; w: number; edge: string; core: string }) {
  return <g><path d={`M${x} ${y1}V${y2}`} stroke={edge} strokeWidth={w} /><path d={`M${x} ${y1 + 1}V${y2 - 1}`} stroke={core} strokeWidth={coreWidth(w)} /></g>;
}
function PipeH({ y, x1, x2, w, edge, core }: { y: number; x1: number; x2: number; w: number; edge: string; core: string }) {
  return <g><path d={`M${x1} ${y}H${x2}`} stroke={edge} strokeWidth={w} /><path d={`M${x1 + 1} ${y}H${x2 - 1}`} stroke={core} strokeWidth={coreWidth(w)} /></g>;
}

function Drawing() {
  return (
    <svg className="absolute inset-0 h-full w-full" viewBox="295 240 1332 736" preserveAspectRatio="xMidYMid slice" fill="none" aria-label="楼层平面图">
      <rect x="0" y="0" width="2400" height="1400" fill="#000" />
      {/* branch pipes, left side */}
      <PipeH y={370} x1={830} x2={980} w={6} edge={Y} core="#c9c6a8" />
      <PipeH y={389} x1={636} x2={1006} w={8} edge="#1616b4" core="#d8d8e8" />
      <PipeH y={403} x1={642} x2={994} w={4} edge="#c4302b" core="#e57d78" />
      <PipeH y={415.5} x1={651} x2={1004} w={6} edge="#a6e6ea" core="#6c9799" />
      <PipeH y={428} x1={659} x2={1004} w={6} edge={Y} core="#c9c6a8" />
      <PipeH y={642} x1={867} x2={1006} w={7} edge="#1a1ae0" core="#dfdfee" />
      {[[845, 376, 440], [949, 374, 438]].map(([x, a, b]) => (
        <g key={x}>
          <path d={`M${x} ${a}V${b}`} stroke="#e6e6e6" strokeWidth="5" />
          <path d={`M${x} ${a}V${b}`} stroke="#8a8a8a" strokeWidth="2" strokeDasharray="10 6" />
          <rect x={x - 5} y={a - 5} width="10" height="10" fill="#878787" stroke="#e8e8e8" />
          <rect x={x - 5} y={b - 5} width="10" height="10" fill="#878787" stroke="#e8e8e8" />
        </g>
      ))}
      {/* small lines crossing the shaft */}
      <path d="M1012 282H1073M1093 431V678" stroke="#5555d8" strokeWidth="3" />
      <path d="M1012 487.500H1093" stroke="#1818c8" strokeWidth="3" />
      <PipeH y={292} x1={993} x2={1083} w={4} edge="#f01818" core="#f08a8a" />
      <PipeH y={495.5} x1={993} x2={1104} w={4} edge="#f01818" core="#f08a8a" />
      <path d="M1101.500 430V679" stroke="#f00" strokeWidth="3" />
      {/* yellow network */}
      <path d="M1080 240V304M1210 240V304M1308.500 240V274M1438.500 240V274M1109.500 403V732M1310.500 404V734M1499.500 434V734M1268 696H1500" stroke={Y} strokeWidth="3" />
      <path d="M1080 240V302M1310.500 405V733M1499.500 435V733" stroke="#c9c36a" strokeWidth="1" />
      <PipeH y={696} x1={985} x2={1268} w={6} edge={Y} core="#d8d5b4" />
      <PipeV x={1251} y1={698} y2={906} w={5} edge={Y} core="#b7b49b" />
      <path d="M1245 691v10M1257 691v10M1265 690v12M1248 701h7M1251 699v6M1106 690v14" stroke={Y} strokeWidth="3" />
      <rect x="976" y="240" width="3" height="448" fill="#8d8836" />
      <rect x="979" y="240" width="3" height="448" fill="#777" />
      <rect x="981" y="240" width="4" height="448" fill="#f4f1c8" />
      <PipeV x={980} y1={686} y2={917} w={6} edge={Y} core="#8f8c84" />
      {[288, 451, 538, 777].map((y) => (
        <path key={y} d={`M975 ${y - 6}h12M975 ${y + 6}h12M969 ${y}h9M974 ${y - 3}v6`} stroke={Y} strokeWidth="2.600" />
      ))}
      <path d="M975 363h12M975 376h12M974 366v8M976 690h11M976 704h9M975 711h12M978 701v10M986 691v9" stroke={Y} strokeWidth="3" />
      {/* risers */}
      <PipeV x={994} y1={290} y2={906} w={4} edge="#e51515" core="#f29a9a" />
      <path d="M991 292h7M991 403h7M991 495h7" stroke="#f00" strokeWidth="5" />
      <path d="M1100 495.500h5" stroke="#f00" strokeWidth="5" />
      <PipeV x={1008} y1={238} y2={915} w={8} edge="#1414e0" core="#dcdce6" />
      <path d="M1004 278h10M1004 284h10M1004 385h10M1004 394h10M1004 485h10M1004 491h10M1004 638h10M1004 648h10" stroke="#1414e0" strokeWidth="2" />
      {/* ducts */}
      <g fill="#858585" stroke="#1818dc" strokeWidth="1.500">
        <rect x="711" y="468.500" width="299" height="9" />
        <rect x="1016" y="230" width="21" height="226" />
        <path d="M1016 456h21l2 9h-24zM1010 466h4v14h-4" />
        <rect x="1013.500" y="465.500" width="27.500" height="476.500" />
        <path d="M1013 484.500h28M1013 569.500h28M1013 588h28" />
        <rect x="1042" y="572.500" width="137" height="9" />
        <path d="M1104 572.500h18v9l-2.500 4h-9l-6-4z" />
        <rect x="1110.500" y="585" width="9" height="146" />
        <path d="M1110.500 731h9l4 5v9q-12-1-13-14z" />
        <rect x="1124" y="735.500" width="55" height="9.500" />
      </g>
      <path d="M1014.500 385v45M1038.500 424v6" stroke="#d9d9d9" strokeDasharray="10 4" />
      <path d="M1011 814.500h31" stroke="#1010e0" strokeWidth="2" />
      <path d="M1011 825h31M1020 820h8" stroke="#1010e0" strokeWidth="3" />
      <circle cx="1020" cy="820" r="3.500" stroke="#1010e0" strokeWidth="1.500" />
      {/* walls */}
      <path d="M893 363h18v12h-18zM893 636h18v13h-18z" fill="#fff" />
      <path d="M895 362h10v14h-10zM897 634h12v17h-12z" fill="#fff" />
      <path d="M1046.500 792V842M950 881H1000" stroke="#fff" strokeWidth="2" />
      <path d="M895.500 230V893.500H1568.500V230H1557V334.500H1059.500V230H1048V882H906.500V230zM1059.500 345.500H1557V882H1059.500z" fill="#868686" fillRule="evenodd" stroke="#e9e9e9" strokeWidth="1.200" />
      <path d="M1016 882.500v10.500M1013.500 894V942H1041V894" stroke="none" />
      {/* section marks */}
      <g strokeWidth="1.500">
        <path d="M824.500 297V328.500H867M806.500 573V604.500H850" stroke="#173a92" />
        <path d="M884 328.500H1086M1104 328.500H1147.500V297M866 604.500H1200M1218 604.500H1259.500V573" stroke="#efefef" />
      </g>
      <g fontSize="15" fontFamily="'Liberation Mono','Noto Sans CJK SC',monospace">
        <g fill="#2244ae"><text x="799" y="277">详图 0</text><text x="797" y="554">A1</text></g>
        <g fill="#e8e8e8"><text x="1124" y="276">详图 0</text><text x="1253" y="554">A1</text></g>
      </g>
    </svg>
  );
}

const viewIcons: { w: string; art: React.ReactNode }[] = [
  { w: "w-[27px]", art: <><path d="M1 3h18v13H1z" fill="#fff" stroke="#444" strokeWidth="1.500" /><path d="M1 3l13 13M6 3l13 13M11 3l8 8M1 8l8 8M19 3L6 16M14 3L1 16M9 3L1 11M19 8l-8 8" stroke="#777" /></> },
  { w: "w-[25px]", art: <><path d="M1 8l5-5h13v8l-5 6H1z" fill="url(#bl)" stroke="#2f6ea8" strokeWidth="1.500" /><path d="M1 8h13v9M14 8l5-5" stroke="#2f6ea8" /></> },
  { w: "w-[27px]", art: <><circle cx="8" cy="8" r="4" stroke="#e8a817" strokeWidth="2" /><path d="M8 0v3M1 8h2M2 3l2 2M14 3l-2 1M3 14l1-2" stroke="#e8a817" strokeWidth="1.500" /><path d="M10 9l8 8M18 9l-8 8" stroke="#d02a20" strokeWidth="2.600" /></> },
  { w: "w-[25px]", art: <><circle cx="8" cy="8" r="6" fill="#eaf4fc" stroke="#3a83bf" strokeWidth="1.500" /><path d="M2 16h8" stroke="#444" strokeWidth="2" /><path d="M10 9l8 8M18 9l-8 8" stroke="#d02a20" strokeWidth="2.600" /></> },
  { w: "w-[27px]", art: <><path d="M5 18V4h14M1 8v6M1 11h4M9 8h6v8H9z" stroke="#2f74ad" strokeWidth="1.600" /><path d="M11 8l8 8M19 8l-8 8" stroke="#d02a20" strokeWidth="2.600" /></> },
  { w: "w-[26px]", art: <><path d="M5 18V4h9M1 8v6M1 11h4M9 8v8M9 8h4" stroke="#2f74ad" strokeWidth="1.600" /><circle cx="16" cy="9" r="3.500" fill="#cde8fb" stroke="#2f74ad" strokeWidth="1.300" /><path d="M16 13v4" stroke="#444" strokeWidth="2" /></> },
  { w: "w-[25px]", art: <><path d="M2 6q5-3 7 5l-4 5q-4-1-3-4 4-3 8-1M10 11q1 4 5 3 4-2 3-7l-5-4M2 6L0 8M18 7l1 1" stroke="#444" strokeWidth="1.400" /></> },
  { w: "w-[26px]", art: <><circle cx="10" cy="8" r="3.500" fill="#cde8fb" stroke="#2f8ad0" strokeWidth="1.500" /><path d="M10 12v4" stroke="#2f6ea8" strokeWidth="2.500" /></> },
  { w: "w-[26px]", art: <><path d="M2 3h14v4M2 3v12h6M5 1v4M9 1v4M13 1v4M4 13v4" stroke="#333" strokeWidth="1.600" /><path d="M10 9h-1v2M17 9h2v2M19 15v2h-2M11 17h-2v-2" stroke="#333" /><circle cx="14" cy="13" r="2.500" fill="#555" /></> },
  { w: "w-[27px]", art: <><path d="M1 7l5-4h9v11M1 7v10M5 7v10M9 7v10M1 7h9M1 12h9" stroke="#444" strokeWidth="1.400" /><path d="M2 13h7" stroke="#c33" strokeWidth="2" /><circle cx="16" cy="7" r="3.500" fill="#f3b93c" stroke="#b97b0b" /><path d="M16 11v5" stroke="#555" strokeWidth="2.500" /></> },
  { w: "w-[27px]", art: <><path d="M1 0v18M17 0v6M1 3h16M4 1L1 3l3 2M14 1l3 2-3 2" stroke="#333" strokeWidth="1.400" /><path d="M2 14h6" stroke="#555" strokeDasharray="2 1" /><path d="M11 10h8v8h-8z" fill="#777" stroke="#333" /><path d="M13 10V7h4v3" stroke="#333" strokeWidth="1.500" /></> },
];

function Viewport() {
  return (
    <main className="flex min-w-0 flex-1 flex-col border-t-2 border-[#7c827a] bg-[#f0f0f0]">
      <div className="flex min-h-0 flex-1">
        <div className="relative min-w-0 flex-1 overflow-hidden bg-black">
          <Drawing />
          <div className="absolute top-[10px] right-[6px] flex items-center gap-[8px]">
            <button aria-label="最小化视图"><Ico w={14} h={14}><path d="M0 11h14" stroke="#ddd" strokeWidth="3.500" /></Ico></button>
            <button aria-label="还原视图"><Ico w={15} h={14}><path d="M4 3V1h9v9h-2" stroke="#ddd" strokeWidth="2" /><path d="M2 4h8v8H2z" stroke="#ddd" strokeWidth="2.500" /></Ico></button>
            <button aria-label="关闭视图"><Ico w={14} h={14}><path d="M2 2l10 10M12 2L2 12" stroke="#e6e6e6" strokeWidth="3.500" /></Ico></button>
          </div>
          <div className="absolute top-[37px] right-[3px] flex h-[143px] w-[40px] flex-col items-center rounded-[4px] border border-[#5c5c5c] bg-[#454545]">
            <span className="mt-[2px] mr-[3px] self-end"><Ico w={8} h={8}><path d="M1 1l6 6M7 1L1 7" stroke="#bbb" /></Ico></span>
            <span className="mt-[15px]"><Ico w={28} h={28}><path d="M1 12A10.500 10.500 0 0 1 12 1h10v11a10.500 10.500 0 0 1-21 0z" fill="#a0a5a8" /><circle cx="11.500" cy="11" r="6" stroke="#555" strokeWidth="1.500" /><circle cx="11.500" cy="11" r="3" stroke="#666" /><ellipse cx="21" cy="22" rx="6" ry="3" stroke="#2f5672" strokeWidth="2.500" /></Ico></span>
            <span className="mt-[17px] w-[31px] border-t border-[#2c2c2c]" />
            <span className="mt-[10px] ml-[4px]"><Ico w={22} h={20}><path d="M1 2h15v6l-7 6-3-4-5 3z" fill="#4e8547" /><circle cx="14" cy="14" r="3.500" fill="#bbb" /><path d="M17 17l3 2" stroke="#777" strokeWidth="1.500" /></Ico></span>
            <span className="mt-auto mr-[3px] mb-[4px] self-end"><Ico w={8} h={7}><path d="M1 1h6M2 4h4L4 6z" fill="#ccc" stroke="#ccc" /></Ico></span>
          </div>
        </div>
        <div className="flex w-[20px] flex-col items-center">
          <span className="flex h-[24px] items-center"><Chevron dir="up" thick={2.500} /></span>
          <span className="mt-[333px] h-[22px] w-[18px] bg-[#cdcdcd]" />
          <span className="mt-auto flex h-[20px] items-center"><Chevron thick={2.500} /></span>
        </div>
        <div className="w-[8px]" />
      </div>
      <div className="flex h-[24px] shrink-0 items-center pb-[3px] pl-[25px] text-black">
        <span className="w-[73px] font-['Liberation_Mono',monospace] text-[13px] leading-[20px]">1 : 100</span>
        {viewIcons.map((v, i) => (
          <button key={i} aria-label={`视图控制 ${i + 1}`} className={v.w}><Ico w={20} h={19}>{v.art}</Ico></button>
        ))}
        <span className="ml-[2px]"><Chevron dir="left" thick={2.500} /></span>
        <span className="ml-[446px] h-[20px] w-[22px] bg-[#cdcdcd]" />
        <span className="mr-[14px] ml-auto"><Chevron dir="right" thick={2.500} /></span>
        <span className="mt-[8px] mr-[9px]"><Ico w={11} h={11}><path d="M8 0h2v2H8zM4 4h2v2H4zM8 4h2v2H8zM0 8h2v2H0zM4 8h2v2H4zM8 8h2v2H8z" fill="#b5b5b5" /></Ico></span>
      </div>
    </main>
  );
}

/* ---------- project browser ---------- */

/* guides: one character per 25px column. | line, t tee, L last leaf, + / - boxes, p / m last box in its branch, f first box */
const tree: { g: string; t: string; icon?: string; on?: boolean }[] = [
  { g: "f", t: "视图 (全部)", icon: "view" },
  { g: "|-", t: "楼层平面" },
  { g: "||t", t: "标高1净高平面" },
  { g: "||L", t: "标高1标注平面", on: true },
  { g: "|+", t: "天花板平面" },
  { g: "|+", t: "三维视图" },
  { g: "|+", t: "立面 (建筑立面)" },
  { g: "|+", t: "剖面 (HW-剖面)" },
  { g: "|m", t: "剖面 (剖面 1)" },
  { g: "| L", t: "详图 0" },
  { g: "t", t: "图例", icon: "legend" },
  { g: "t", t: "明细表/数量", icon: "schedule" },
  { g: "t", t: "图纸 (全部)", icon: "sheet" },
  { g: "-", t: "族", icon: "family" },
  { g: "|-", t: "喷头" },
  { g: "||+", t: "标准上喷头" },
  { g: "||p", t: "标准下喷头" },
  { g: "|+", t: "坡道" },
  { g: "|-", t: "填充图案" },
  { g: "||+", t: "1/2 错缝" },
  { g: "||+", t: "1/3 错缝" },
  { g: "||+", t: "_无填充图案" },
  { g: "||+", t: "Z 字形" },
  { g: "||+", t: "三角形(弯曲)" },
  { g: "||+", t: "三角形(扁平)" },
  { g: "||+", t: "三角形棋盘(弯曲)" },
  { g: "||+", t: "三角形棋盘(扁平)" },
  { g: "||+", t: "三角形错缝(弯曲)" },
  { g: "||+", t: "八边形" },
];

const treeArt: Record<string, React.ReactNode> = {
  view: <><path d="M1 5V1h4M14 1h4v4M18 14v4h-4M5 18H1v-4" stroke="#333" strokeWidth="1.500" /><path d="M6 7l3-2h5v6l-3 3H6z" fill="#fff" stroke="#555" strokeWidth="1.300" /></>,
  legend: <><path d="M1 1h18v17H1z" fill="#eef0f2" stroke={S} strokeWidth="1.500" /><path d="M1 3h18" stroke={S} strokeWidth="4" /><path d="M4 8h3v2H4zM4 13h3v2H4zM9 8h3M13 8h3M9 10h7M9 13h3M13 13h3M9 15h7" stroke={S} /></>,
  schedule: <><path d="M1 3h18v14H1z" fill="#eef0f2" stroke={S} strokeWidth="1.500" /><path d="M1 5h18" stroke={S} strokeWidth="3" /><path d="M5 4v13M9 4v13M1 9h18M1 13h18" stroke={S} /></>,
  sheet: <><path d="M1 2h12l6 5v11H1z" fill="#eef0f2" stroke={S} strokeWidth="1.500" /><path d="M4 6h8v8H9v-5H4zM4 11h3v4h6v-3M13 2v6h6" stroke={S} strokeWidth="1.200" /></>,
  family: <><path d="M2 2h7v6H2z" fill="#fff" stroke={S} strokeWidth="1.500" /><path d="M11 2h7v16H2v-7h9z" fill="#e4e7eb" stroke={S} strokeWidth="1.500" /></>,
};

function Guide({ c }: { c: string }) {
  const up = c !== "f" && c !== " ";
  const down = "|t+-f".includes(c);
  const out = c !== "|" && c !== " ";
  const box = "+-pmf".includes(c);
  const plus = c === "+" || c === "p";
  return (
    <span className="relative h-[25px] w-[25px] shrink-0">
      {up && <i className="absolute top-0 left-[12px] h-[13px] border-l border-dotted border-[#999]" />}
      {down && <i className="absolute top-[12px] left-[12px] h-[13px] border-l border-dotted border-[#999]" />}
      {out && <i className="absolute top-[12px] left-[12px] w-[13px] border-t border-dotted border-[#999]" />}
      {box && (
        <i className="absolute top-[7px] left-[7px] flex">
          <Ico w={11} h={11}><rect x=".5" y=".5" width="10" height="10" rx="1" fill="#f8f8f8" stroke="#8f8f8f" /><path d={plus ? "M2.500 5.500h6M5.500 2.500v6" : "M2.500 5.500h6"} stroke="#3a4f9a" strokeWidth="1.300" /></Ico>
        </i>
      )}
    </span>
  );
}

function Browser() {
  return (
    <aside className="flex w-[265px] shrink-0 flex-col bg-[#f0f0f0] text-[15px] text-[#161616]">
      <div className="flex h-[22px] shrink-0 items-center justify-between bg-[#bfcddd] pr-[8px] pl-[5px] leading-[22px] whitespace-nowrap">
        项目浏览器 - 管综项目.0001.000...
        <button aria-label="关闭项目浏览器"><CloseX /></button>
      </div>
      <div className="mt-[3px] flex min-h-0 flex-1 flex-col border-t border-l-2 border-[#777]">
        <div className="flex min-h-0 flex-1">
          <ul className="-ml-[2px] min-w-0 flex-1 overflow-hidden border-l-2 border-[#777] bg-white">
            {tree.map((n, i) => (
              <li key={i} className="-ml-[1px] flex h-[25px] items-center whitespace-nowrap">
                {n.g.split("").map((c, j) => <Guide key={j} c={c} />)}
                {n.icon ? (
                  <span className="flex w-[27px] pl-[2px]"><Ico w={20} h={19}>{treeArt[n.icon]}</Ico></span>
                ) : (
                  <i className="mr-[1px] w-[5px] border-t border-dotted border-[#999]" />
                )}
                <button className={n.on ? "bg-[#e0e0e2] px-[3px] leading-[24px] font-bold" : "px-[3px] leading-[24px]"}>{n.t}</button>
              </li>
            ))}
          </ul>
          <div className="flex w-[21px] flex-col items-center pr-[2px]">
            <span className="flex h-[21px] items-center"><Chevron dir="up" thick={2.500} /></span>
            <span className="h-[199px] w-[18px] bg-[#cdcdcd]" />
            <span className="mt-auto flex h-[16px] items-center"><Chevron thick={2.500} /></span>
          </div>
        </div>
        <div className="flex h-[22px] shrink-0 items-center pb-[2px] pl-[4px]">
          <Chevron dir="left" thick={2.500} />
          <span className="ml-[6px] h-[18px] w-[92px] bg-[#cdcdcd]" />
          <span className="mr-[26px] ml-auto"><Chevron dir="right" thick={2.500} /></span>
        </div>
      </div>
    </aside>
  );
}

/* ---------- status bar ---------- */

const Cur = () => <path d="M10 8v11l3-2 2 4 2-1-2-4h4z" fill="#fff" stroke="#333" strokeWidth="1.200" />;
const selIcons: React.ReactNode[] = [
  <><ellipse cx="5" cy="5" rx="4" ry="3" stroke="#e0a420" strokeWidth="2.500" /><ellipse cx="15" cy="5" rx="4" ry="3" stroke="#e0a420" strokeWidth="2.500" /><Cur /></>,
  <><path d="M1 14L12 3v9M1 14h11M1 18h11" stroke="#3a83bf" strokeWidth="2" /><path d="M12 1l7 7M19 1l-7 7" stroke="#d02a20" strokeWidth="2.500" /><Cur /></>,
  <><path d="M2 1h11v3h-2v5l3 3H1l3-3V4H2z" fill="#f6b79a" stroke="#d2571f" strokeWidth="1.500" /><path d="M7 12v7" stroke="#444" strokeWidth="1.500" /><Cur /></>,
  <><path d="M2 5l10-4v14L2 19z" fill="url(#bl)" stroke="#2f6ea8" strokeWidth="1.500" /><Cur /></>,
  <><path d="M7 0v13M0 6h13M5 2l2-2 2 2M5 11l2 2 2-2M2 4L0 6l2 2M11 4l2 2-2 2" stroke="#333" strokeWidth="1.500" /><Cur /></>,
];

function StatusBar() {
  return (
    <div className="flex h-[30px] shrink-0 items-center border-t-2 border-[#8a8a8a] bg-gradient-to-b from-[#e3e3e3] to-[#c6c6c6] text-[15px] text-black">
      <span className="w-[812px] pl-[3px] leading-[24px]">管道：管道类型：-内外热镀锌钢管-卡箍</span>
      <button aria-label="工作共享" className="flex h-full w-[34px] items-center justify-center bg-[#d3d3d3]">
        <Ico w={21} h={21}><path d="M1 10l4-3h4v10l-4 3H1z" fill="url(#bl)" stroke="#2f6ea8" strokeWidth="1.500" /><path d="M7 6V2h7l2 3h-4v4" stroke="#3b8a35" strokeWidth="2" /><path d="M16 8q-4 0-3 4l2 1v7h3v-7q2-2 0-5" fill="#e4eef6" stroke="#2f5f8a" strokeWidth="1.300" /></Ico>
      </button>
      <Picker label="活动工作集" value="" className="mt-[2px] ml-[3px] h-[26px] w-[254px] bg-white" chevron="#bbb" />
      <span className="ml-[10px] flex w-[65px] items-center gap-[7px]">
        <Ico w={20} h={21}><path d="M2 2h15l-3 5h-4v4l-4 3V7H5zM1 20l5-6h4l-1 6z" fill="#c9c9c9" stroke="#777" /></Ico>
        :0
      </span>
      <button aria-label="设计选项" className="flex w-[28px] justify-center">
        <Ico w={20} h={20}><path d="M1 1h18v18H1z" fill="#f2f2f2" stroke="#333" strokeWidth="1.600" /><path d="M1 3h18" stroke="#555" strokeWidth="3" /><path d="M4 7h3v3H4zM10 8h7M10 12h7M10 16h7M5 10v6h3" stroke="#333" strokeWidth="1.300" /></Ico>
      </button>
      <button aria-label="添加到选项集" className="ml-[4px] flex w-[28px] justify-center">
        <Ico w={20} h={20}><path d="M4 1h15v18H4z" fill="#a3a3a3" /><path d="M0 13h9M6 8l6 5-6 5" stroke="#707070" strokeWidth="2" /></Ico>
      </button>
      <Picker label="主模型" value="主模型" className="mt-[2px] ml-[5px] h-[26px] w-[193px] bg-white text-[#8a8a8a]" chevron="#bbb" />
      <div className="mr-[82px] ml-auto flex items-center gap-[2px]">
        {selIcons.map((a, i) => (
          <button key={i} aria-label={`选择选项 ${i + 1}`} className="flex h-[27px] w-[30px] items-center justify-center bg-[#d9d9d9]"><Ico w={21} h={22}>{a}</Ico></button>
        ))}
        <button aria-label="过滤器" className="flex items-center">
          <Ico w={22} h={21}><path d="M1 2h20l-7 8v8l-5 2V10z" fill="url(#mv)" stroke="#555" /></Ico>
          <span className="mt-[6px] leading-[20px]">:0</span>
        </button>
      </div>
    </div>
  );
}

/* ---------- taskbar ---------- */

const apps: { n: string; on?: boolean; cur?: boolean; art: React.ReactNode }[] = [
  { n: "Cortana", art: <circle cx="15" cy="15" r="8.500" stroke="#111" strokeWidth="2.800" /> },
  { n: "任务视图", art: <path d="M5 10h11v10H5zM5 5v2.500h11V5M5 25v-2.500h11V25M22 5v6M22 15v10M20.500 13h3" stroke="#111" strokeWidth="1.500" /> },
  { n: "搜索工具", art: <><circle cx="18" cy="11" r="8.500" stroke="#7a4a1c" strokeWidth="6" /><circle cx="18" cy="11" r="8.500" stroke="#f5832a" strokeWidth="4.500" /><path d="M12 17L4 26" stroke="#7a4a1c" strokeWidth="7" strokeLinecap="round" /><path d="M12 17L4 26" stroke="#f5832a" strokeWidth="5.500" strokeLinecap="round" /></> },
  { n: "文件资源管理器", art: <><path d="M2 3h11l2 4h13v19H2z" fill="#f4c64f" /><path d="M2 3h11v4H2z" fill="#cf962c" /><path d="M6 26V15h17v11h-4v-7h-9v7z" fill="#3d93e0" /></> },
  { n: "Edge", on: true, art: <><circle cx="15" cy="15" r="15" fill="url(#edge1)" /><path d="M1 12Q4 0 16 0q13 1 14 13 0 7-8 7-6 0-4-5 0-5-7-6Q5 8 1 12z" fill="url(#edge2)" /><path d="M9 17q1 9 10 11 5 0 9-5-6 2-10-1-4-4-1-8-6-4-8 3z" fill="#0b4a92" /><path d="M17 14q4 0 1 5 3 3 8 1-4 4-8 2-4-3-1-8z" fill="#d3e8f0" /></> },
  { n: "浏览器", art: <><circle cx="15" cy="15" r="14.500" fill="#2fb0dd" /><path d="M22 19q-3 4-8 3-6-2-6-8 2-6 8-6 6 1 5 5-1 3-11 3" stroke="#fff" strokeWidth="3.500" /></> },
  { n: "钉钉", on: true, art: <><circle cx="15" cy="15" r="15" fill="#3a93e8" /><path d="M8 6l15 6q1 3-3 7l1 1-7 7 1-6-3-1 2-2-4-3 3-1-4-3 2-1z" fill="#fff" /></> },
  { n: "Revit", on: true, art: <><rect width="30" height="30" fill="#dfe7f0" /><text x="6" y="24" fontSize="26" fontWeight="700" fontFamily="Liberation Sans" fill="#1f4f96">R</text></> },
  { n: "AutoCAD", on: true, art: <><rect width="30" height="30" fill="#f7e3d8" /><path d="M4 26L12 3h7l8 23h-6l-2-6h-7l-3 6zM13 16h5l-2-8z" fill="#b3202a" fillRule="evenodd" /></> },
  { n: "工作", on: true, art: <><rect x="1" y="1" width="22" height="22" rx="3" fill="#f0401f" /><text x="2" y="16" fontSize="10" fontWeight="700" fontFamily="Noto Sans CJK SC" fill="#fff">工作</text><path d="M17 14h8l4 4v12H17z" fill="#4c8be0" /><path d="M19 21l2 5 2-4 2 4 2-5" stroke="#fff" strokeWidth="1.500" /></> },
  { n: "头像", on: true, art: <><ellipse cx="15" cy="15" rx="14" ry="15" fill="#c9d3d6" /><path d="M12 3q8-5 11 5l1 16-4 5h-3z" fill="#20181e" /><path d="M11 5q5-1 5 5-2 4-5 3z" fill="#e8b9a6" /><path d="M8 14q7-3 9 4l-1 12H8z" fill="#e5d3d6" /><path d="M9 20l7 2v4l-7-1z" fill="#b98f94" /></> },
  { n: "Camtasia", on: true, art: <><rect width="30" height="30" rx="3" fill="#62b016" /><rect x="3" y="3" width="24" height="24" fill="#4c9c10" /><path d="M23 8H11q-3 0-3 3v8q0 3 3 3h12" stroke="#fff" strokeWidth="4.500" /></> },
  { n: "Revit 2016", on: true, cur: true, art: <><rect width="30" height="30" fill="url(#tile)" /><path d="M9 5l6-2q6 1 5 7l-2 4 5 12h-4l-5-9-3 9H7z" fill="#1e4391" /></> },
];

function Taskbar() {
  return (
    <footer className="flex h-[50px] shrink-0 items-stretch bg-gradient-to-r from-[#cde7ee] via-[#d3e5ed] to-[#d5deeb] text-[#111]">
      <button aria-label="开始" className="flex w-[61px] items-center justify-center bg-[#cbe6ee]">
        <Ico w={20} h={20}><path d="M0 3l8-1v8H0zM9 2l11-2v10H9zM0 11h8v8l-8-1zM9 11h11v9L9 18.500z" fill="#000" /></Ico>
      </button>
      <label className="flex w-[428px] items-center gap-[14px] bg-white pl-[14px]">
        <Ico w={21} h={21}><circle cx="13" cy="8" r="6.500" stroke="#111" strokeWidth="1.600" /><path d="M8.500 13L1 20" stroke="#111" strokeWidth="1.600" /></Ico>
        <input aria-label="搜索" placeholder="在这里输入你要搜索的内容" className="w-[340px] text-[19px] leading-[30px] outline-none placeholder:text-[#333]" />
      </label>
      <div className="flex">
        {apps.map((a) => (
          <button key={a.n} aria-label={a.n} className={`relative flex w-[62px] items-center justify-center ${a.cur ? "bg-[#eaf3f8]" : ""}`}>
            <Ico w={30} h={30}>{a.art}</Ico>
            {a.on && <i className={a.cur ? "absolute inset-x-0 bottom-0 h-[3px] bg-[#1279c9]" : "absolute inset-x-[5px] bottom-0 h-[3px] bg-[#1279c9]"} />}
          </button>
        ))}
      </div>
      <div className="ml-auto flex items-center text-[17px]">
        <Ico w={60} h={24}>
          <path d="M3 1v5M9 1v5M1 6h10v6q-1 4-3 4v7H5v-7q-4-1-4-4z" fill="#fff" stroke="#555" />
          <path d="M15 1h38v5h4v12h-4v5H15z" fill="#fff" stroke="#444" />
          <rect x="18" y="4" width="33" height="16" fill="#22913c" />
          <text x="19" y="17" fontSize="12" fontFamily="Open Sans" fill="#fff">100%</text>
        </Ico>
        <span className="ml-[26px]"><Ico w={28} h={22}><path d="M6 20q-6-1-5-7 1-5 6-5 2-8 9-7 6 1 6 6 6 2 5 8-2 5-7 5z" fill="#bfe3f7" stroke="#8fc4e4" /><path d="M16 1q7 1 6 7 5 2 4 8-2 4-7 4 3-8-3-19z" fill="#8fcdf0" /></Ico></span>
        <span className="ml-[10px] w-[60px] text-[18px] leading-[30px]">29°C</span>
        <button aria-label="显示隐藏的图标" className="w-[30px]"><Ico w={18} h={12}><path d="M2 10l7-7 7 7" stroke="#111" strokeWidth="1.500" /></Ico></button>
        <span className="w-[32px]"><Ico w={22} h={16}><path d="M5 5h14v8H5z" fill="#000" stroke="#000" /><path d="M20 7v4M2 1v3M6 1v3M1 4h6v3H4v6" stroke="#000" strokeWidth="1.500" /></Ico></span>
        <span className="w-[28px]"><Ico w={18} h={18}><path d="M2 17Q2 3 17 2M6 17Q6 7 17 6M10 17q0-6 7-7" stroke="#222" strokeWidth="1.500" /><circle cx="15" cy="15" r="2" fill="#222" /></Ico></span>
        <span className="w-[29px]"><Ico w={22} h={16}><path d="M1 5h4l4-4v14l-4-4H1z" stroke="#222" strokeWidth="1.300" /><path d="M12 5q2 3 0 6" stroke="#222" strokeWidth="1.300" /><path d="M15 3q4 5 0 10M18 1q5 7 0 14" stroke="#999" strokeWidth="1.300" /></Ico></span>
        <span className="w-[30px] text-[18px] leading-[24px]">中</span>
        <div className="w-[80px] text-center text-[15px] leading-[23px]">14:57<br />2021/10/8</div>
        <button aria-label="通知" className="relative ml-[22px] flex w-[31px]">
          <Ico w={31} h={31}><path d="M1 2h20v16H8l-5 5v-5H1z" fill="#000" /><path d="M4 6h14M4 10h14M4 14h9" stroke="#fff" strokeWidth="1.500" /><circle cx="20" cy="20" r="10" fill="#dcdfe4" stroke="#888" /><text x="15.500" y="25.500" fontSize="15" fontWeight="700" fontFamily="Open Sans" fill="#000">7</text></Ico>
        </button>
        <i className="mr-[5px] ml-[15px] h-[50px] w-px bg-[#b5bdc8]" />
      </div>
    </footer>
  );
}

export default function App() {
  return (
    <div className="flex h-screen flex-col overflow-hidden bg-[#f0f0f0] font-['Open_Sans','Noto_Sans_CJK_SC',sans-serif] text-[15px]">
      <SharedDefs />
      <Header />
      <Ribbon />
      <QuickAccess />
      <OptionsBar />
      <div className="flex min-h-0 flex-1">
        <Properties />
        <Viewport />
        <Browser />
      </div>
      <StatusBar />
      <Taskbar />
    </div>
  );
}
